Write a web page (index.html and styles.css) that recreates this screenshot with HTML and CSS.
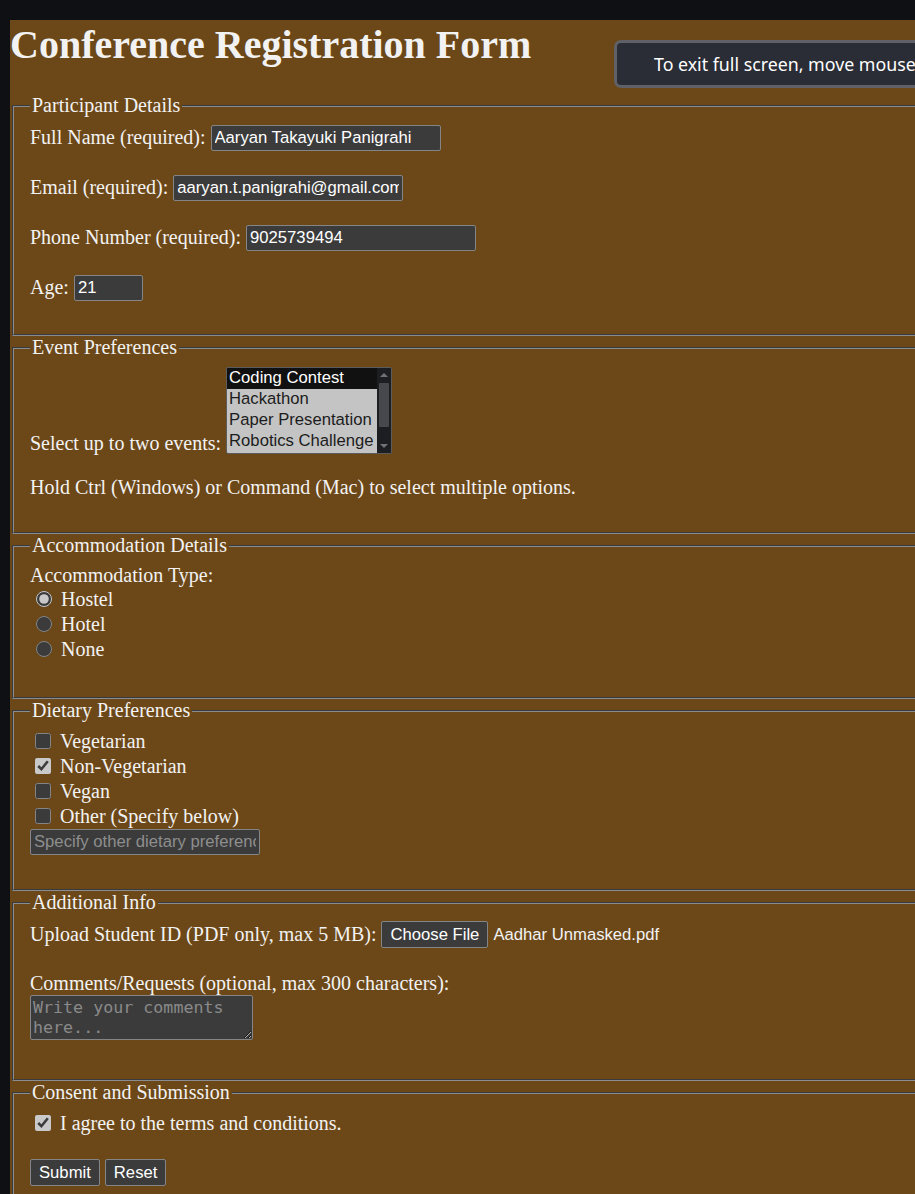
FILE: index.html
```html
<!DOCTYPE html>
<html lang="en">
<head>
<meta charset="utf-8">
<title>Conference Registration Form</title>
<link rel="stylesheet" href="styles.css">
</head>
<body>
<div class="screen">
  <main class="page">
    <h1 class="title">Conference Registration Form</h1>
    <form class="form" onsubmit="return false">
      <fieldset class="group">
        <legend>Participant Details</legend>
        <div class="row"><label for="name">Full Name (required):</label><input id="name" class="field" type="text" value="Aaryan Takayuki Panigrahi"></div>
        <div class="row"><label for="email">Email (required):</label><input id="email" class="field" type="email" value="aaryan.t.panigrahi@gmail.com"></div>
        <div class="row"><label for="phone">Phone Number (required):</label><input id="phone" class="field" type="tel" value="9025739494"></div>
        <div class="row last"><label for="age">Age:</label><input id="age" class="field field-age" type="number" value="21"></div>
      </fieldset>

      <fieldset class="group">
        <legend>Event Preferences</legend>
        <div class="events">
          <label for="events" class="events-label">Select up to two events:</label>
          <div class="listbox">
            <select id="events" class="listbox-select" multiple size="4">
              <option selected>Coding Contest</option>
              <option>Hackathon</option>
              <option>Paper Presentation</option>
              <option>Robotics Challenge</option>
              <option>Tech Quiz</option>
              <option>Workshop</option>
            </select>
            <div class="scrollbar" aria-hidden="true">
              <span class="sb-arrow"><span class="sb-tri sb-up"></span></span>
              <span class="sb-track"><span class="sb-thumb"></span></span>
              <span class="sb-arrow"><span class="sb-tri sb-down"></span></span>
            </div>
          </div>
        </div>
        <p class="hint">Hold Ctrl (Windows) or Command (Mac) to select multiple options.</p>
      </fieldset>

      <fieldset class="group">
        <legend>Accommodation Details</legend>
        <div class="line">Accommodation Type:</div>
        <div class="options options-radio">
          <label class="opt"><input type="radio" name="acc" checked><span>Hostel</span></label>
          <label class="opt"><input type="radio" name="acc"><span>Hotel</span></label>
          <label class="opt"><input type="radio" name="acc"><span>None</span></label>
        </div>
      </fieldset>

      <fieldset class="group">
        <legend>Dietary Preferences</legend>
        <div class="options">
          <label class="opt"><input type="checkbox"><span>Vegetarian</span></label>
          <label class="opt"><input type="checkbox" checked><span>Non-Vegetarian</span></label>
          <label class="opt"><input type="checkbox"><span>Vegan</span></label>
          <label class="opt"><input type="checkbox"><span>Other (Specify below)</span></label>
        </div>
        <div class="row-input"><input class="field" type="text" placeholder="Specify other dietary preference"></div>
      </fieldset>

      <fieldset class="group">
        <legend>Additional Info</legend>
        <div class="upload">
          <span>Upload Student ID (PDF only, max 5 MB):</span>
          <button type="button" class="btn">Choose File</button>
          <span class="file-name">Aadhar Unmasked.pdf</span>
        </div>
        <div class="line comments-label"><label for="comments">Comments/Requests (optional, max 300 characters):</label></div>
        <div class="row-textarea"><textarea id="comments" class="comments" rows="2" placeholder="Write your comments here..."></textarea></div>
      </fieldset>

      <fieldset class="group">
        <legend>Consent and Submission</legend>
        <div class="options">
          <label class="opt"><input type="checkbox" checked><span>I agree to the terms and conditions.</span></label>
        </div>
        <div class="actions">
          <button type="submit" class="btn">Submit</button>
          <button type="reset" class="btn">Reset</button>
        </div>
      </fieldset>
    </form>
  </main>
  <div class="fs-notice">To exit full screen, move mouse</div>
</div>
</body>
</html>
```
FILE: styles.css
```css
html, body {
  margin: 0;
  padding: 0;
  background: #0e1014;
  height: 100%;
  overflow: hidden;
}

body {
  color-scheme: dark;
}

.screen {
  position: relative;
  width: 915px;
  height: 1194px;
  overflow: hidden;
  padding: 20px 0 0 10px;
  box-sizing: border-box;
}

.page {
  background: #6c4818;
  width: 1300px;
  height: 1400px;
  color: #f2f2f2;
  font-family: "Liberation Serif", "Times New Roman", serif;
  font-size: 20px;
}

.title {
  margin: 0;
  padding-top: 2px;
  font-size: 40px;
  font-weight: bold;
  line-height: 46px;
  margin-bottom: 26px;
}

.form {
  margin: 0;
}

.group {
  margin: 0 2px;
  border: 2px groove #8a8c90;
  padding: 7px 15px 13px 16px;
  min-inline-size: 0;
}

.group legend {
  padding: 0 2px;
  line-height: 23px;
}

.row {
  display: flex;
  align-items: center;
  gap: 5px;
  height: 27px;
  margin-bottom: 23px;
}

.row.last {
  margin-bottom: 20px;
}

.field {
  font-family: "Liberation Sans", Arial, sans-serif;
  font-size: 16.67px;
  width: 230px;
  height: 26px;
  box-sizing: border-box;
  padding: 1px 3px;
  border: 1px solid #858585;
  border-radius: 2px;
  background: #3b3b3b;
  color: #ffffff;
  margin: 0;
}

.field::placeholder {
  color: #8e8e8e;
}

.field-age {
  width: 69px;
  -moz-appearance: textfield;
  appearance: textfield;
}

.field-age::-webkit-inner-spin-button,
.field-age::-webkit-outer-spin-button {
  -webkit-appearance: none;
  margin: 0;
}

.events {
  display: flex;
  align-items: flex-end;
  gap: 5px;
  margin-top: 1px;
}

.events-label {
  line-height: 23px;
  margin-bottom: -1px;
}

.listbox {
  display: flex;
  width: 166px;
  height: 87px;
  box-sizing: border-box;
  border: 1px solid #5c5c5c;
  border-radius: 2px;
  overflow: hidden;
  background: #1d1e21;
}

.listbox-select {
  flex: 1;
  min-width: 0;
  height: 100%;
  margin: 0;
  padding: 0;
  border: 0;
  border-radius: 0;
  background: #c4c4c4;
  color: #1c1c1c;
  font-family: "Liberation Sans", Arial, sans-serif;
  font-size: 16.67px;
  overflow: hidden;
  scrollbar-width: none;
  outline: none;
}

.listbox-select option {
  padding: 0 2px;
  line-height: 21px;
  height: 21px;
  min-height: 21px;
  box-sizing: border-box;
}

.listbox-select option:checked {
  background: #111111 linear-gradient(#111111, #111111);
  color: #ffffff;
}

.scrollbar {
  width: 14px;
  flex: none;
  display: flex;
  flex-direction: column;
  background: #1d1e21;
}

.sb-arrow {
  height: 14px;
  display: flex;
  align-items: center;
  justify-content: center;
}

.sb-tri {
  width: 0;
  height: 0;
  border-left: 4px solid transparent;
  border-right: 4px solid transparent;
}

.sb-up {
  border-bottom: 4px solid #707276;
}

.sb-down {
  border-top: 4px solid #707276;
}

.sb-track {
  flex: 1;
  padding: 1px 2px;
}

.sb-thumb {
  display: block;
  height: 44px;
  background: #46484c;
  border-radius: 1px;
}

.hint {
  margin: 22px 0 20px;
  line-height: 23px;
}

.line {
  line-height: 23px;
}

.options {
  display: flex;
  flex-direction: column;
}

.options-radio {
  margin-bottom: 22px;
}

.opt {
  display: flex;
  align-items: flex-start;
  height: 25px;
  line-height: 25px;
}

.opt input {
  width: 16px;
  height: 16px;
  margin: 4px 9px 0 5px;
  flex: none;
  accent-color: #c9c9c9;
}

.opt input[type="radio"] {
  margin-left: 6px;
  margin-right: 9px;
}

.row-input {
  height: 26px;
  margin-bottom: 21px;
  display: flex;
}

.upload {
  display: flex;
  align-items: center;
  gap: 5px;
  height: 27px;
}

.btn {
  font-family: "Liberation Sans", Arial, sans-serif;
  font-size: 16.67px;
  color: #ffffff;
  background: #3b3b3b;
  border: 1px solid #858585;
  border-radius: 2px;
  height: 27px;
  padding: 1px 8px;
  margin: 0;
  box-sizing: border-box;
}

.file-name {
  font-family: "Liberation Sans", Arial, sans-serif;
  font-size: 16.67px;
}

.comments-label {
  margin-top: 24px;
}

.row-textarea {
  display: flex;
  margin-bottom: 26px;
}

.comments {
  width: 223px;
  height: 45px;
  box-sizing: border-box;
  margin: 0;
  padding: 2px 2px;
  border: 1px solid #858585;
  border-radius: 2px;
  background: #3b3b3b;
  color: #ffffff;
  font-family: "DejaVu Sans Mono", monospace;
  font-size: 16.67px;
  line-height: 19.5px;
}

.comments::placeholder {
  color: #8a8a8a;
}

.actions {
  display: flex;
  gap: 5px;
  margin-top: 23px;
}

.fs-notice {
  position: absolute;
  left: 614px;
  top: 40px;
  width: 420px;
  height: 48px;
  box-sizing: border-box;
  border: 3px solid #5f6166;
  border-radius: 7px;
  background: #2a2d35;
  color: #ffffff;
  font-family: "Noto Sans", "Open Sans", sans-serif;
  font-size: 17.8px;
  line-height: 42px;
  padding-left: 37px;
  white-space: nowrap;
}
```
